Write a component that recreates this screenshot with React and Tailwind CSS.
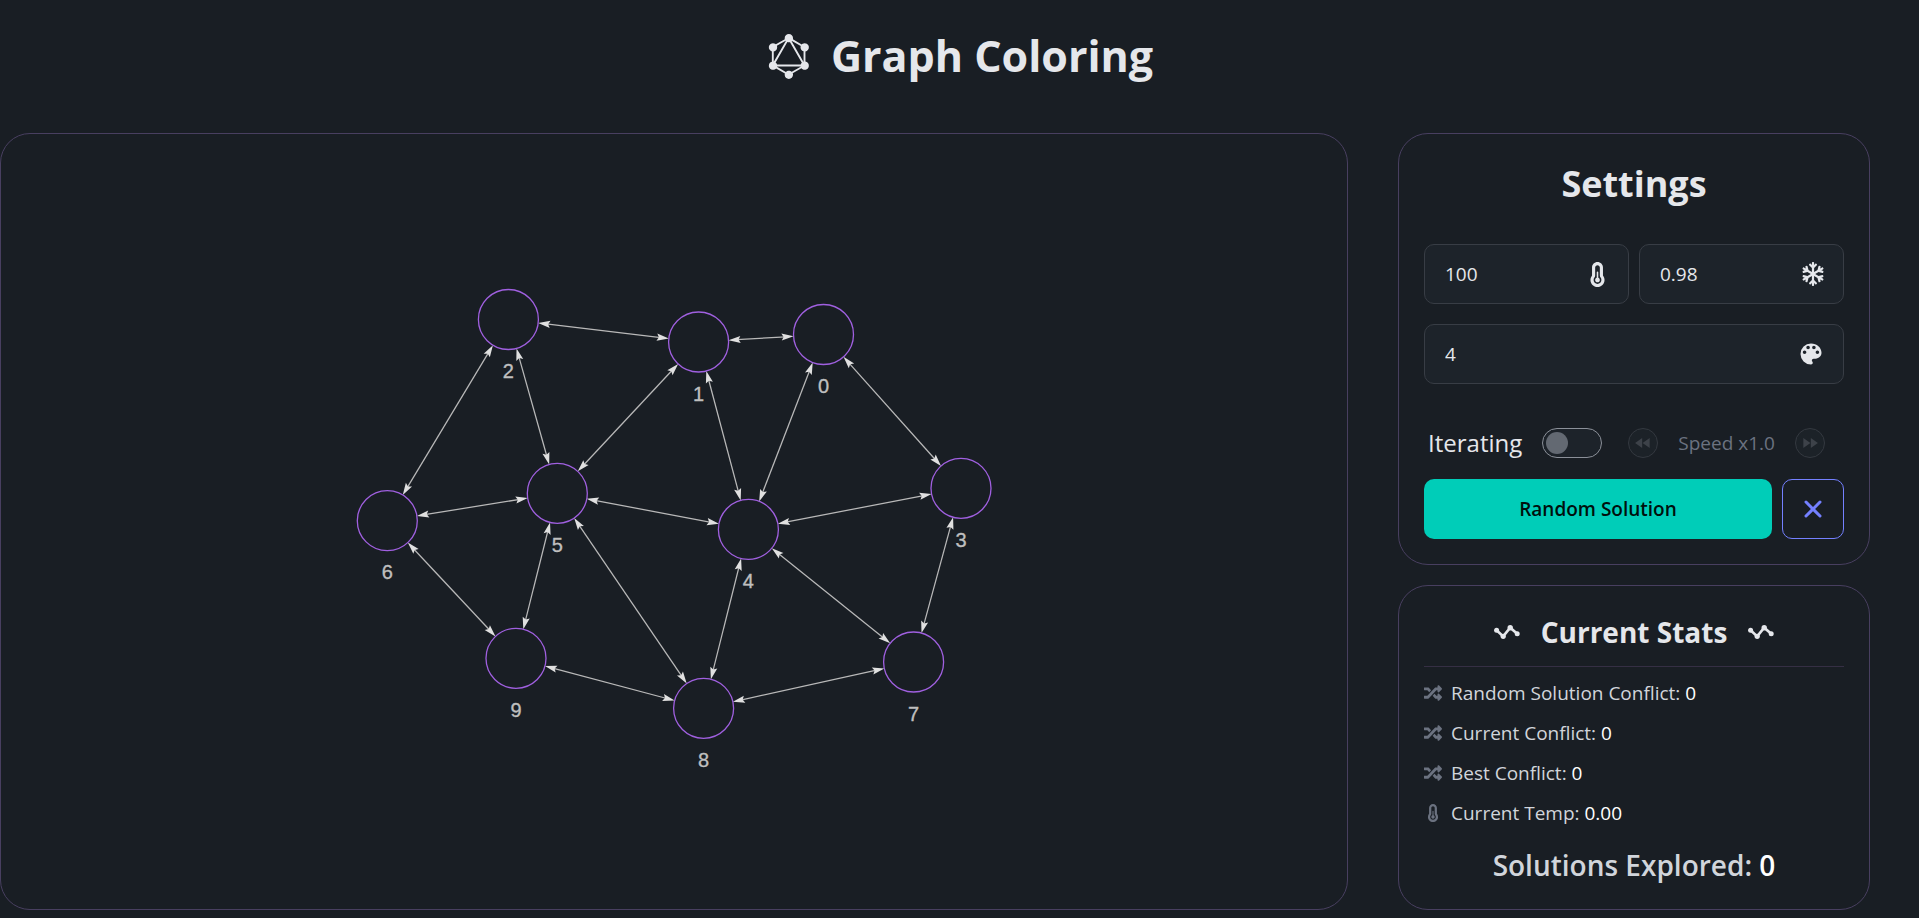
import { useState } from "react";
import { FaRandom, FaRegSnowflake } from "react-icons/fa";
import { FaTemperatureHalf } from "react-icons/fa6";
import { GrGraphQl } from "react-icons/gr";
import { IoClose } from "react-icons/io5";
import { MdColorLens, MdFastForward, MdFastRewind } from "react-icons/md";

const NODES = [
  { x: 823.5, y: 334.5 },
  { x: 698.6, y: 342 },
  { x: 508.4, y: 319.5 },
  { x: 961, y: 488.3 },
  { x: 748.4, y: 529.4 },
  { x: 557.3, y: 493.3 },
  { x: 387.3, y: 520.7 },
  { x: 913.6, y: 662 },
  { x: 703.6, y: 708.3 },
  { x: 516, y: 658.3 },
];

const EDGES = [
  [0, 1], [0, 3], [0, 4], [1, 2], [1, 4], [1, 5], [2, 5], [2, 6], [3, 4], [3, 7],
  [4, 5], [4, 7], [4, 8], [5, 6], [5, 8], [5, 9], [6, 9], [7, 8], [8, 9],
];

const RADIUS = 30;

function Edge({ from, to }) {
  const dx = to.x - from.x;
  const dy = to.y - from.y;
  const length = Math.hypot(dx, dy);
  const angle = (Math.atan2(dy, dx) * 180) / Math.PI;
  const start = RADIUS;
  const end = length - RADIUS;
  return (
    <g transform={`translate(${from.x} ${from.y}) rotate(${angle})`}>
      <line x1={start + 8} x2={end - 8} y1="0" y2="0" stroke="#b9b9b9" strokeWidth="1.25" />
      <path d="M0 0L12 -3.6L10 0L12 3.6Z" transform={`translate(${start} 0)`} fill="#e0e0e0" />
      <path d="M0 0L-12 -3.6L-10 0L-12 3.6Z" transform={`translate(${end} 0)`} fill="#e0e0e0" />
    </g>
  );
}

function Graph() {
  return (
    <svg viewBox="1 134 1346 775" className="h-full w-full" role="img" aria-label="Graph">
      {EDGES.map(([a, b]) => (
        <Edge key={`${a}-${b}`} from={NODES[a]} to={NODES[b]} />
      ))}
      {NODES.map((node, i) => (
        <g key={i}>
          <circle cx={node.x} cy={node.y} r={RADIUS} fill="none" stroke="#a060e0" strokeWidth="1.3" />
          <text
            x={node.x}
            y={node.y + 58.5}
            textAnchor="middle"
            className="fill-[#bfbfbf] stroke-[#bfbfbf] font-['Liberation_Sans',sans-serif] text-[20px] [stroke-width:0.35px]"
          >
            {i}
          </text>
        </g>
      ))}
    </svg>
  );
}

function Zigzag() {
  return (
    <svg viewBox="0 0 26 14" className="h-[14px] w-[26px]" fill="currentColor" aria-hidden="true">
      <path d="M2.6 5.2L9.2 11.4L16.2 2.7L23.2 8.8" fill="none" stroke="currentColor" strokeWidth="2.6" />
      <circle cx="2.6" cy="5.2" r="2.5" />
      <circle cx="9.2" cy="11.3" r="2.6" />
      <circle cx="16.2" cy="2.7" r="2.7" />
      <circle cx="23.2" cy="8.8" r="2.5" />
    </svg>
  );
}

function Field({ label, initial, children }) {
  const [value, setValue] = useState(initial);
  return (
    <label className="flex h-[60px] min-w-0 flex-1 items-center rounded-[10px] border border-[#383d45] bg-[#1d232a] pr-[18px] pl-5">
      <input
        className="w-full min-w-0 flex-1 bg-transparent text-[19px] outline-none"
        aria-label={label}
        inputMode="decimal"
        value={value}
        onChange={(e) => setValue(e.target.value)}
      />
      {children}
    </label>
  );
}

function Stat({ icon: Icon, label, value }) {
  return (
    <li className="flex h-10 items-center gap-[9px] text-[19px] text-[#d1d5db]">
      <Icon className="text-[18px] text-[#6b7280]" />
      <span>
        {label}: <span className="text-white">{value}</span>
      </span>
    </li>
  );
}

function SpeedButton({ label, children }) {
  return (
    <button
      disabled
      aria-label={label}
      className="flex size-[30px] items-center justify-center rounded-full border border-[#343940] bg-[#1c2228] text-[20px] text-[#3d4249]"
    >
      {children}
    </button>
  );
}

export default function App() {
  const [iterating, setIterating] = useState(false);
  return (
    <div className="min-h-screen bg-[#191e24] font-['Open_Sans',sans-serif] text-[#e5e7eb]">
      <header className="flex items-center justify-center gap-5 pt-[26px] pb-[47px]">
        <GrGraphQl className="text-[45px]" />
        <h1 className="text-[43px] leading-[60px] font-bold">Graph Coloring</h1>
      </header>

      <main className="grid grid-cols-[1fr_472px] gap-[50px] pr-[49px]">
        <section className="min-w-0 rounded-[30px] border border-[#483f60]">
          <Graph />
        </section>

        <div className="flex flex-col gap-5">
          <section className="rounded-[30px] border border-[#483f60] p-[25px]">
            <h2 className="mb-9 pt-px text-center text-[36px] leading-[48px] font-bold">Settings</h2>
            <div className="flex flex-col gap-5">
              <div className="flex gap-[10px]">
                <Field label="Initial temperature" initial="100">
                  <FaTemperatureHalf className="shrink-0 text-[25px]" />
                </Field>
                <Field label="Cooling rate" initial="0.98">
                  <FaRegSnowflake className="shrink-0 text-[24px]" />
                </Field>
              </div>
              <div className="flex">
                <Field label="Number of colors" initial="4">
                  <MdColorLens className="shrink-0 text-[28px]" />
                </Field>
              </div>
            </div>

            <div className="mt-11 mb-[21px] flex h-[30px] items-center gap-[26px] pl-1">
              <label className="flex items-center gap-5 text-[24px] leading-[30px]">
                Iterating
                <input
                  type="checkbox"
                  role="switch"
                  checked={iterating}
                  onChange={(e) => setIterating(e.target.checked)}
                  className="flex h-[30px] w-[60px] appearance-none rounded-full border border-[#8b9099] bg-[#1d232a] p-[3px] before:block before:size-[22px] before:rounded-full before:bg-[#636972] before:content-[''] checked:justify-end"
                />
              </label>
              <div className="flex items-center gap-5">
                <SpeedButton label="Slower">
                  <MdFastRewind />
                </SpeedButton>
                <span className="text-[19px] whitespace-nowrap text-[#6b7280]">Speed x1.0</span>
                <SpeedButton label="Faster">
                  <MdFastForward />
                </SpeedButton>
              </div>
            </div>

            <div className="flex gap-[10px]">
              <button className="h-[60px] flex-1 rounded-[10px] bg-[#00cdb8] text-[19px] font-semibold text-[#00100d]">
                Random Solution
              </button>
              <button
                aria-label="Clear"
                className="flex h-[60px] w-[62px] items-center justify-center rounded-[10px] border border-[#7480ff] text-[32px] text-[#7480ff]"
              >
                <IoClose />
              </button>
            </div>
          </section>

          <section className="rounded-[30px] border border-[#483f60] p-[25px]">
            <h2 className="mb-[13px] flex items-center justify-center gap-[21px] text-[28px] leading-[42px] font-bold">
              <Zigzag />
              Current Stats
              <Zigzag />
            </h2>
            <hr className="mb-[6px] border-[#352f44]" />
            <ul>
              <Stat icon={FaRandom} label="Random Solution Conflict" value="0" />
              <Stat icon={FaRandom} label="Current Conflict" value="0" />
              <Stat icon={FaRandom} label="Best Conflict" value="0" />
              <Stat icon={FaTemperatureHalf} label="Current Temp" value="0.00" />
            </ul>
            <p className="mt-3 -mb-px text-center text-[28px] leading-10 font-semibold text-[#d1d5db]">
              Solutions Explored: <span className="text-white">0</span>
            </p>
          </section>
        </div>
      </main>
    </div>
  );
}
